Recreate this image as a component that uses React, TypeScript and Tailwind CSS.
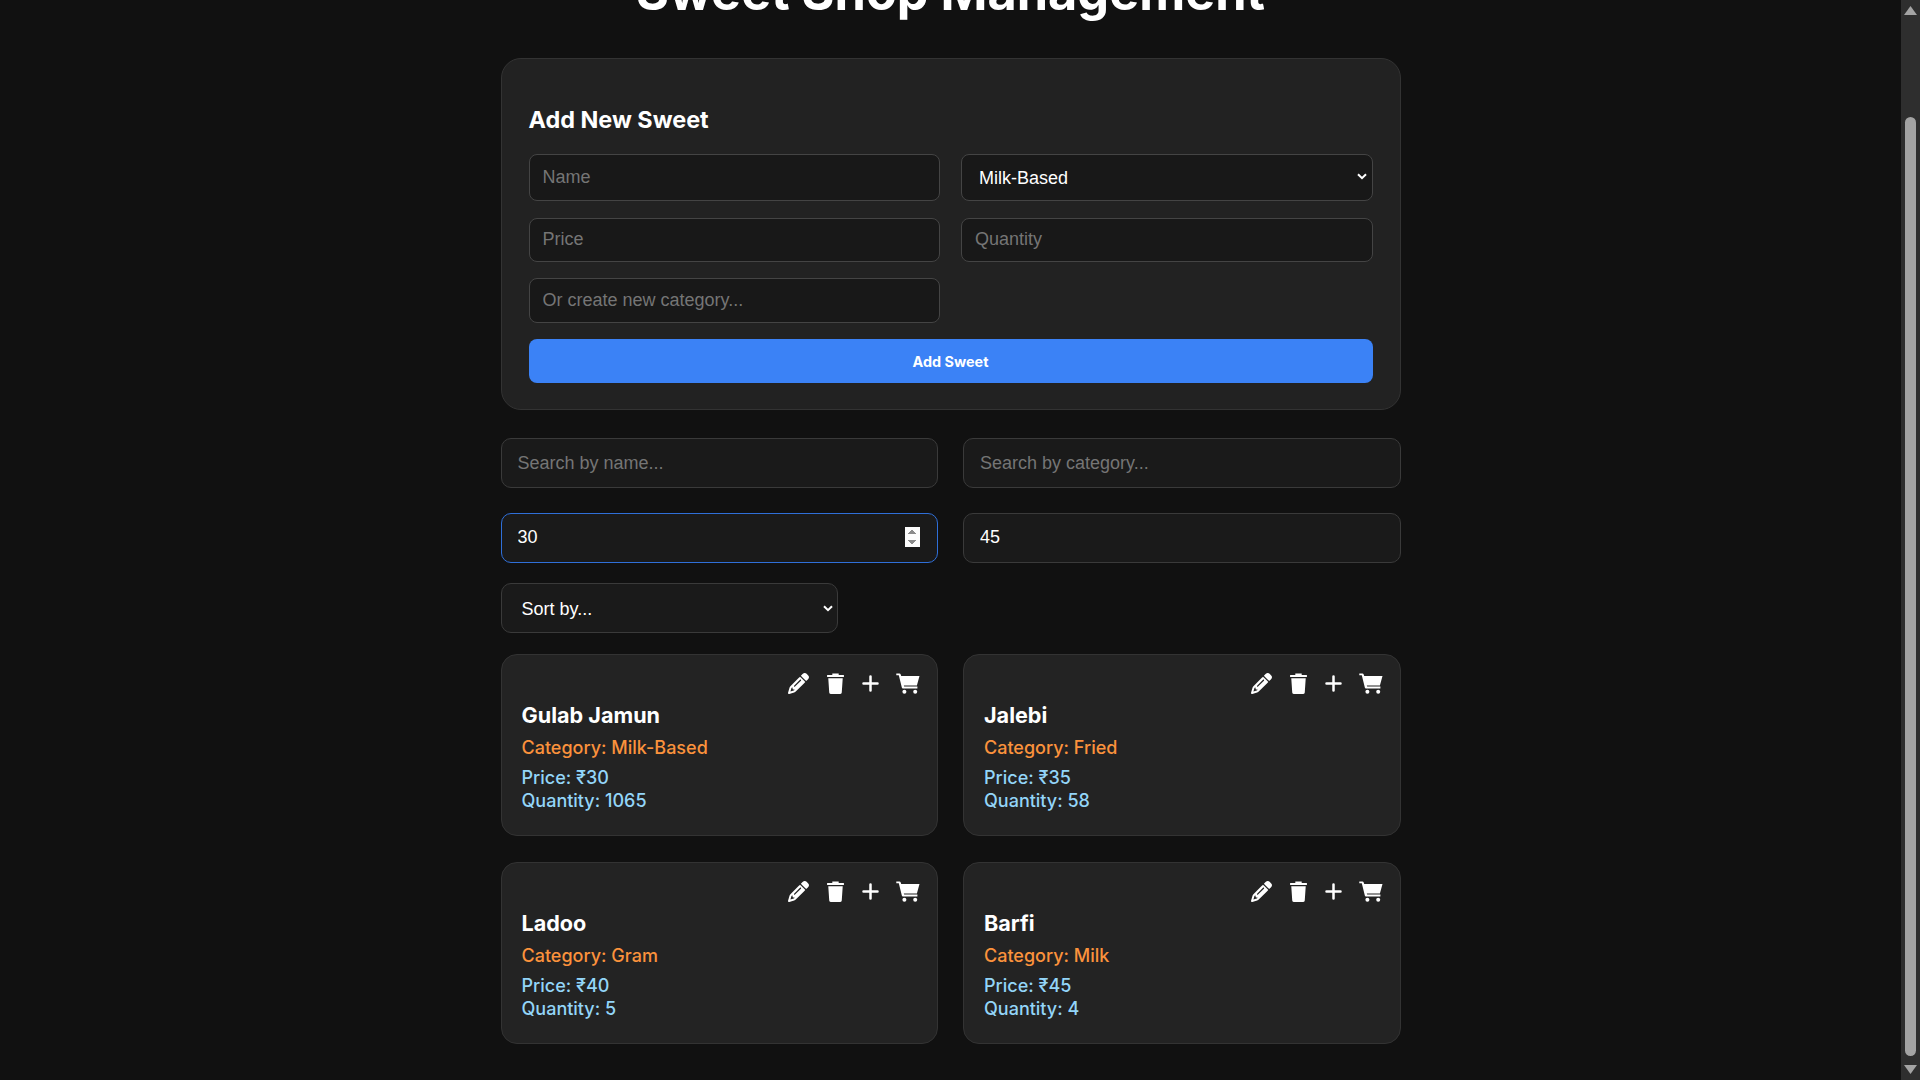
import React from 'react'
import { FaPencil } from 'react-icons/fa6'

interface Sweet {
  name: string
  category: string
  price: number
  quantity: number
}

const sweets: Sweet[] = [
  { name: 'Gulab Jamun', category: 'Milk-Based', price: 30, quantity: 1065 },
  { name: 'Jalebi', category: 'Fried', price: 35, quantity: 58 },
  { name: 'Ladoo', category: 'Gram', price: 40, quantity: 5 },
  { name: 'Barfi', category: 'Milk', price: 45, quantity: 4 },
]

const formInput =
  "w-full h-full rounded-lg border border-[#444] bg-[#181818] px-[13px] font-['Liberation_Sans',sans-serif] text-[18px] text-white outline-none placeholder:text-[#757575]"

const filterInput =
  "w-full h-[50px] rounded-[10px] border border-[#3a3a3a] bg-[#1a1a1a] pl-4 pr-[15px] py-[14px] font-['Liberation_Sans',sans-serif] text-[18px] leading-[20px] text-white outline-none placeholder:text-[#757575]"

const Chevron: React.FC<{ className: string }> = ({ className }) => (
  <svg
    width="10"
    height="7"
    viewBox="0 0 10 7"
    className={'pointer-events-none absolute fill-none stroke-white ' + className}
    strokeWidth="2"
  >
    <path d="M1 1.2 L5 5.2 L9 1.2" />
  </svg>
)

const TrashIcon = () => (
  <svg width="17" height="21" viewBox="0 0 16 21" preserveAspectRatio="none" className="fill-white">
    <path d="M5 0.5h6v1.5h4.6a0.4 0.4 0 0 1 .4 .4v1.2a0.4 0.4 0 0 1 -.4 .4H.4a0.4 0.4 0 0 1 -.4 -.4V2.4a0.4 0.4 0 0 1 .4 -.4H5z" />
    <path d="M1.2 5.2h13.6l-.9 14.4a1.4 1.4 0 0 1 -1.4 1.4H3.5a1.4 1.4 0 0 1 -1.4 -1.4z" />
  </svg>
)

const PlusIcon = () => (
  <svg width="17" height="21" viewBox="0 0 17 21" className="stroke-white" strokeWidth="2.5" strokeLinecap="round">
    <path d="M8.5 3.5v14M1.5 10.5h14" />
  </svg>
)

const CartIcon = () => (
  <svg width="24" height="21" viewBox="0 0 24 21" className="-ml-px fill-white">
    <path d="M0.3 0.4h3.2a1.2 1.2 0 0 1 1.1 .8l.6 1.8h18.3l-2.6 9.4H7.8l.4 1.2h13.2v1.8H6.9a1 1 0 0 1 -1 -.7L2.8 2.2H0.3z" />
    <circle cx="8.4" cy="18.8" r="2" />
    <circle cx="19.2" cy="18.8" r="2" />
  </svg>
)

const SweetCard: React.FC<{ sweet: Sweet }> = ({ sweet }) => (
  <div className="h-[182px] rounded-2xl border border-[#333] bg-[#232323] px-5 pt-[18px]">
    <div className="-mr-[3px] flex h-[21px] items-center justify-end gap-[18px] text-[21px] text-white">
      <FaPencil />
      <TrashIcon />
      <PlusIcon />
      <CartIcon />
    </div>
    <h3 className="mt-[5px] text-[21.6px] leading-[32px] font-bold text-white">{sweet.name}</h3>
    <p className="mt-[3px] text-[18px] leading-[28px] font-medium text-[#fb923c]">Category: {sweet.category}</p>
    <p className="mt-[4px] text-[18px] leading-[23px] font-medium text-[#93d5f8]">Price: ₹{sweet.price}</p>
    <p className="text-[18px] leading-[23px] font-medium text-[#93d5f8]">Quantity: {sweet.quantity}</p>
  </div>
)

const Scrollbar: React.FC = () => (
  <aside className="flex h-screen w-[19px] shrink-0 flex-col items-center bg-[#2e2e2e]">
    <svg width="13" height="9" viewBox="0 0 13 9" className="mt-[6px] fill-[#a3a3a3]">
      <path d="M6.5 0 L13 9 L0 9 Z" />
    </svg>
    <div className="mt-[102px] h-[939px] w-[11px] rounded-full bg-[#a3a3a3]" />
    <svg width="13" height="9" viewBox="0 0 13 9" className="mt-[9px] fill-[#a3a3a3]">
      <path d="M0 0 L13 0 L6.5 9 Z" />
    </svg>
  </aside>
)

export default function App() {
  return (
    <div className="flex h-screen overflow-hidden bg-[#111] font-['Inter',sans-serif]">
      <main className="min-w-0 flex-1">
        <div className="mx-auto w-[900px]">
          <h1 className="mt-[-37px] text-center text-[50.4px] leading-[58px] font-bold whitespace-nowrap text-white">
            Sweet Shop Management
          </h1>

          <section className="mt-[37px] h-[352px] rounded-[20px] border border-[#333] bg-[#222] px-[27px] pt-[46px]">
            <h2 className="text-[23.4px] leading-[29px] font-bold text-white">Add New Sweet</h2>
            <div className="mt-5 grid grid-cols-2 grid-rows-[47px_44px_45px] gap-x-[21px] gap-y-[16.5px]">
              <input className={formInput} placeholder="Name" />
              <div className="relative">
                <select className={formInput + ' appearance-none pt-[2px] pl-[17px] text-[17.8px]'} defaultValue="Milk-Based">
                  <option>Milk-Based</option>
                </select>
                <Chevron className="top-[19px] right-[6px]" />
              </div>
              <input className={formInput} placeholder="Price" />
              <input className={formInput} placeholder="Quantity" />
              <input className={formInput} placeholder="Or create new category..." />
            </div>
            <button className="mt-4 h-[44px] w-full rounded-lg bg-[#3b82f6] pt-px text-[14.4px] font-bold text-white">
              Add Sweet
            </button>
          </section>

          <div className="mt-[28px] grid grid-cols-2 gap-x-[25px]">
            <input className={filterInput} placeholder="Search by name..." />
            <input className={filterInput} placeholder="Search by category..." />
          </div>

          <div className="mt-[25px] grid grid-cols-2 gap-x-[25px]">
            <input
              type="number"
              readOnly
              value={30}
              className={filterInput + ' !border-[#2f6fd8] pt-[13px] pr-[17px] pb-[15px] [&::-webkit-inner-spin-button]:opacity-100'}
            />
            <input type="number" readOnly value={45} className={filterInput + ' pt-[13px] pb-[15px]'} />
          </div>

          <div className="relative mt-[20px] w-[337px]">
            <select className={filterInput + ' appearance-none pt-[15px] pb-[13px] pl-5 text-[17.8px]'} defaultValue="">
              <option value="">Sort by...</option>
            </select>
            <Chevron className="top-[22px] right-[5px]" />
          </div>

          <div className="mt-[21px] grid grid-cols-2 gap-x-[25px] gap-y-[26px]">
            {sweets.map((sweet) => (
              <SweetCard key={sweet.name} sweet={sweet} />
            ))}
          </div>
        </div>
      </main>
      <Scrollbar />
    </div>
  )
}
